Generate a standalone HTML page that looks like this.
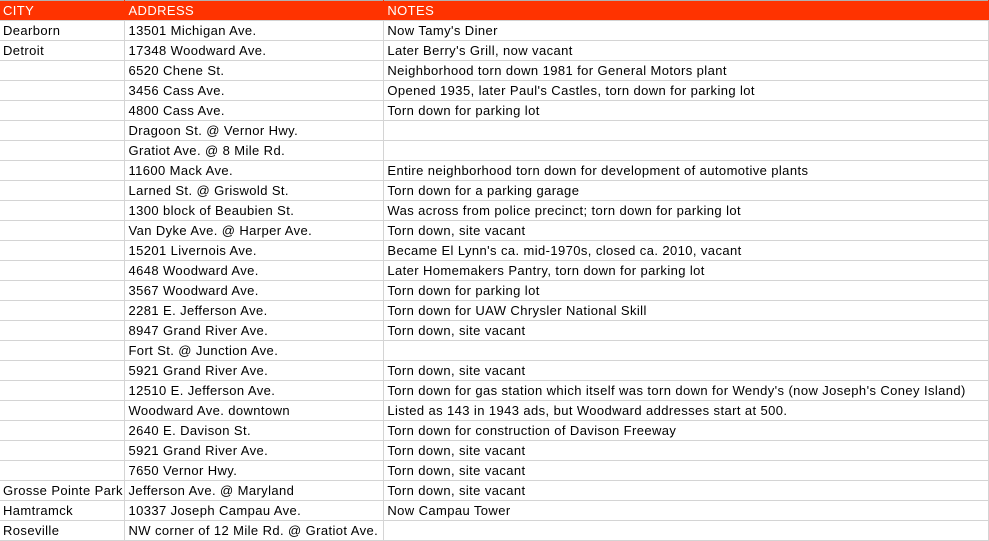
<!DOCTYPE html>
<html><head><meta charset="utf-8"><style>
html,body{margin:0;padding:0;background:#fff;width:989px;height:541px;overflow:hidden}
table{border-collapse:collapse;table-layout:fixed;font-family:"Liberation Sans",sans-serif;font-size:13px;letter-spacing:0.4px;color:#000}
td{height:19px;padding:0 0 0 3px;border-right:1px solid #d4d4d4;border-bottom:1px solid #d4d4d4;white-space:nowrap;overflow:hidden;line-height:19px}
tr.h td{background:#ff3300;color:#fff;height:19px;border-bottom:1px solid #d4d4d4;border-right:1px solid #ff3300;border-top:1px solid #b0b0b0;line-height:19px}
</style></head><body>
<table>
<colgroup><col style="width:125px"><col style="width:259px"><col style="width:605px"></colgroup>
<tr class="h"><td>CITY</td><td>ADDRESS</td><td>NOTES</td></tr>
<tr><td>Dearborn</td><td>13501 Michigan Ave.</td><td>Now Tamy's Diner</td></tr>
<tr><td>Detroit</td><td>17348 Woodward Ave.</td><td>Later Berry's Grill, now vacant</td></tr>
<tr><td></td><td>6520 Chene St.</td><td>Neighborhood torn down 1981 for General Motors plant</td></tr>
<tr><td></td><td>3456 Cass Ave.</td><td>Opened 1935, later Paul's Castles, torn down for parking lot</td></tr>
<tr><td></td><td>4800 Cass Ave.</td><td>Torn down for parking lot</td></tr>
<tr><td></td><td>Dragoon St. @ Vernor Hwy.</td><td></td></tr>
<tr><td></td><td>Gratiot Ave. @ 8 Mile Rd.</td><td></td></tr>
<tr><td></td><td>11600 Mack Ave.</td><td>Entire neighborhood torn down for development of automotive plants</td></tr>
<tr><td></td><td>Larned St. @ Griswold St.</td><td>Torn down for a parking garage</td></tr>
<tr><td></td><td>1300 block of Beaubien St.</td><td>Was across from police precinct; torn down for parking lot</td></tr>
<tr><td></td><td>Van Dyke Ave. @ Harper Ave.</td><td>Torn down, site vacant</td></tr>
<tr><td></td><td>15201 Livernois Ave.</td><td>Became El Lynn's ca. mid-1970s, closed ca. 2010, vacant</td></tr>
<tr><td></td><td>4648 Woodward Ave.</td><td>Later Homemakers Pantry, torn down for parking lot</td></tr>
<tr><td></td><td>3567 Woodward Ave.</td><td>Torn down for parking lot</td></tr>
<tr><td></td><td>2281 E. Jefferson Ave.</td><td>Torn down for UAW Chrysler National Skill</td></tr>
<tr><td></td><td>8947 Grand River Ave.</td><td>Torn down, site vacant</td></tr>
<tr><td></td><td>Fort St. @ Junction Ave.</td><td></td></tr>
<tr><td></td><td>5921 Grand River Ave.</td><td>Torn down, site vacant</td></tr>
<tr><td></td><td>12510 E. Jefferson Ave.</td><td>Torn down for gas station which itself was torn down for Wendy's (now Joseph's Coney Island)</td></tr>
<tr><td></td><td>Woodward Ave. downtown</td><td>Listed as 143 in 1943 ads, but Woodward addresses start at 500.</td></tr>
<tr><td></td><td>2640 E. Davison St.</td><td>Torn down for construction of Davison Freeway</td></tr>
<tr><td></td><td>5921 Grand River Ave.</td><td>Torn down, site vacant</td></tr>
<tr><td></td><td>7650 Vernor Hwy.</td><td>Torn down, site vacant</td></tr>
<tr><td>Grosse Pointe Park</td><td>Jefferson Ave. @ Maryland</td><td>Torn down, site vacant</td></tr>
<tr><td>Hamtramck</td><td>10337 Joseph Campau Ave.</td><td>Now Campau Tower</td></tr>
<tr><td>Roseville</td><td>NW corner of 12 Mile Rd. @ Gratiot Ave.</td><td></td></tr>
</table>
</body></html>
